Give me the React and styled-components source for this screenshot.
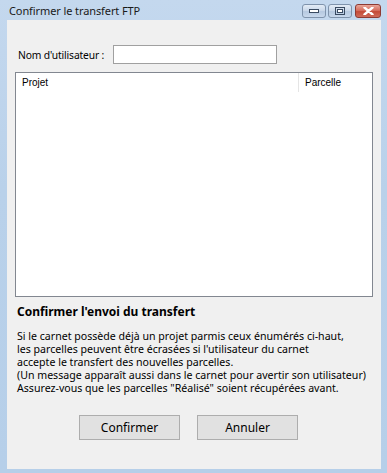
import React from "react";
import styled, { createGlobalStyle } from "styled-components";

const GlobalStyle = createGlobalStyle`
  html, body {
    margin: 0;
    padding: 0;
    background: #ffffff;
  }
  * {
    box-sizing: border-box;
  }
`;

const Window = styled.div`
  width: 387px;
  height: 473px;
  display: flex;
  flex-direction: column;
  background: linear-gradient(180deg, #c4d8ee 0%, #b9d1ea 40%, #b6cfe9 100%);
  padding: 0 6px 4px 7px;
  overflow: hidden;
  font-family: "Noto Sans", "Open Sans", sans-serif;
`;

const TitleBar = styled.div`
  height: 20px;
  display: flex;
  align-items: flex-start;
  justify-content: space-between;
`;

const Title = styled.div`
  font-size: 11px;
  color: #1a1a1a;
  padding: 3px 0 0 2px;
  letter-spacing: -0.1px;
`;

const Controls = styled.div`
  display: flex;
  gap: 2px;
  padding-top: 4px;
`;

const CtrlButton = styled.div`
  width: ${(p) => (p.$close ? "26px" : "24px")};
  height: 14px;
  border-radius: 3px;
  border: 1px solid ${(p) => (p.$close ? "#8d3a33" : "#7f93ac")};
  background: ${(p) =>
    p.$close
      ? "linear-gradient(180deg, #e8a79b 0%, #d66f5f 45%, #c44a37 55%, #cf6b5a 100%)"
      : "linear-gradient(180deg, #e3ecf6 0%, #cbd9ea 45%, #b6c9e0 55%, #c8d8ec 100%)"};
  display: flex;
  align-items: center;
  justify-content: center;
  margin-left: ${(p) => (p.$close ? "1px" : "0")};
`;

const Content = styled.div`
  flex: 1;
  background: #f0f0f0;
  display: flex;
  flex-direction: column;
  padding: 25px 8px 0 8px;
`;

const UserRow = styled.div`
  display: flex;
  align-items: center;
  height: 19px;
  padding-left: 3px;
`;

const Label = styled.label`
  font-size: 10.3px;
  color: #000;
  width: 95px;
  white-space: nowrap;
  letter-spacing: -0.15px;
`;

const TextInput = styled.input`
  width: 164px;
  height: 19px;
  border: 1px solid #a0a0a0;
  background: #fff;
  outline: none;
  padding: 0 3px;
`;

const ListBox = styled.div`
  margin-top: 8px;
  width: 358px;
  height: 225px;
  border: 1px solid #828790;
  background: #fff;
`;

const ListHeader = styled.div`
  display: flex;
  height: 20px;
  font-family: "Liberation Sans", Arial, sans-serif;
  font-size: 10px;
  color: #000;
`;

const HeaderCell = styled.div`
  width: ${(p) => p.$width};
  padding: 4px 0 0 6px;
  border-right: ${(p) => (p.$divider ? "1px solid #e5e5e5" : "none")};
  height: 19px;
`;

const Heading = styled.h2`
  margin: 6px 0 0 2px;
  font-size: 12px;
  font-weight: 700;
  color: #000;
`;

const Paragraph = styled.p`
  margin: 10px 0 0 2px;
  font-size: 10.6px;
  line-height: 13px;
  color: #000;
`;

const ButtonRow = styled.div`
  display: flex;
  gap: 17px;
  margin-top: 20px;
  padding-left: 64px;
`;

const Button = styled.button`
  width: 101px;
  height: 25px;
  border: 1px solid #adadad;
  background: #e1e1e1;
  font-family: "Noto Sans", "Open Sans", sans-serif;
  font-size: 12px;
  color: #000;
  padding: 0;
`;

function MinIcon() {
  return (
    <svg width="10" height="4" viewBox="0 0 10 4">
      <rect x="0.5" y="0.5" width="9" height="3" fill="#fff" stroke="#394a61" />
    </svg>
  );
}

function MaxIcon() {
  return (
    <svg width="10" height="8" viewBox="0 0 10 8">
      <rect x="0.5" y="0.5" width="9" height="7" fill="none" stroke="#394a61" />
      <rect x="2.5" y="2.5" width="5" height="3" fill="#fff" stroke="#394a61" />
    </svg>
  );
}

function CloseIcon() {
  return (
    <svg width="11" height="8" viewBox="0 0 11 8">
      <path
        d="M1.5 0.5 L9.5 7.5 M9.5 0.5 L1.5 7.5"
        stroke="#ffffff"
        strokeWidth="2.4"
        strokeLinecap="round"
      />
    </svg>
  );
}

export default function App() {
  return (
    <>
      <GlobalStyle />
      <Window>
        <TitleBar>
          <Title>Confirmer le transfert FTP</Title>
          <Controls>
            <CtrlButton>
              <MinIcon />
            </CtrlButton>
            <CtrlButton>
              <MaxIcon />
            </CtrlButton>
            <CtrlButton $close>
              <CloseIcon />
            </CtrlButton>
          </Controls>
        </TitleBar>
        <Content>
          <UserRow>
            <Label>Nom d'utilisateur :</Label>
            <TextInput />
          </UserRow>
          <ListBox>
            <ListHeader>
              <HeaderCell $width="283px" $divider>
                Projet
              </HeaderCell>
              <HeaderCell $width="73px">Parcelle</HeaderCell>
            </ListHeader>
          </ListBox>
          <Heading>Confirmer l'envoi du transfert</Heading>
          <Paragraph>
            Si le carnet possède déjà un projet parmis ceux énumérés ci-haut,
            <br />
            les parcelles peuvent être écrasées si l'utilisateur du carnet
            <br />
            accepte le transfert des nouvelles parcelles.
            <br />
            (Un message apparaît aussi dans le carnet pour avertir son utilisateur)
            <br />
            Assurez-vous que les parcelles "Réalisé" soient récupérées avant.
          </Paragraph>
          <ButtonRow>
            <Button>Confirmer</Button>
            <Button>Annuler</Button>
          </ButtonRow>
        </Content>
      </Window>
    </>
  );
}
